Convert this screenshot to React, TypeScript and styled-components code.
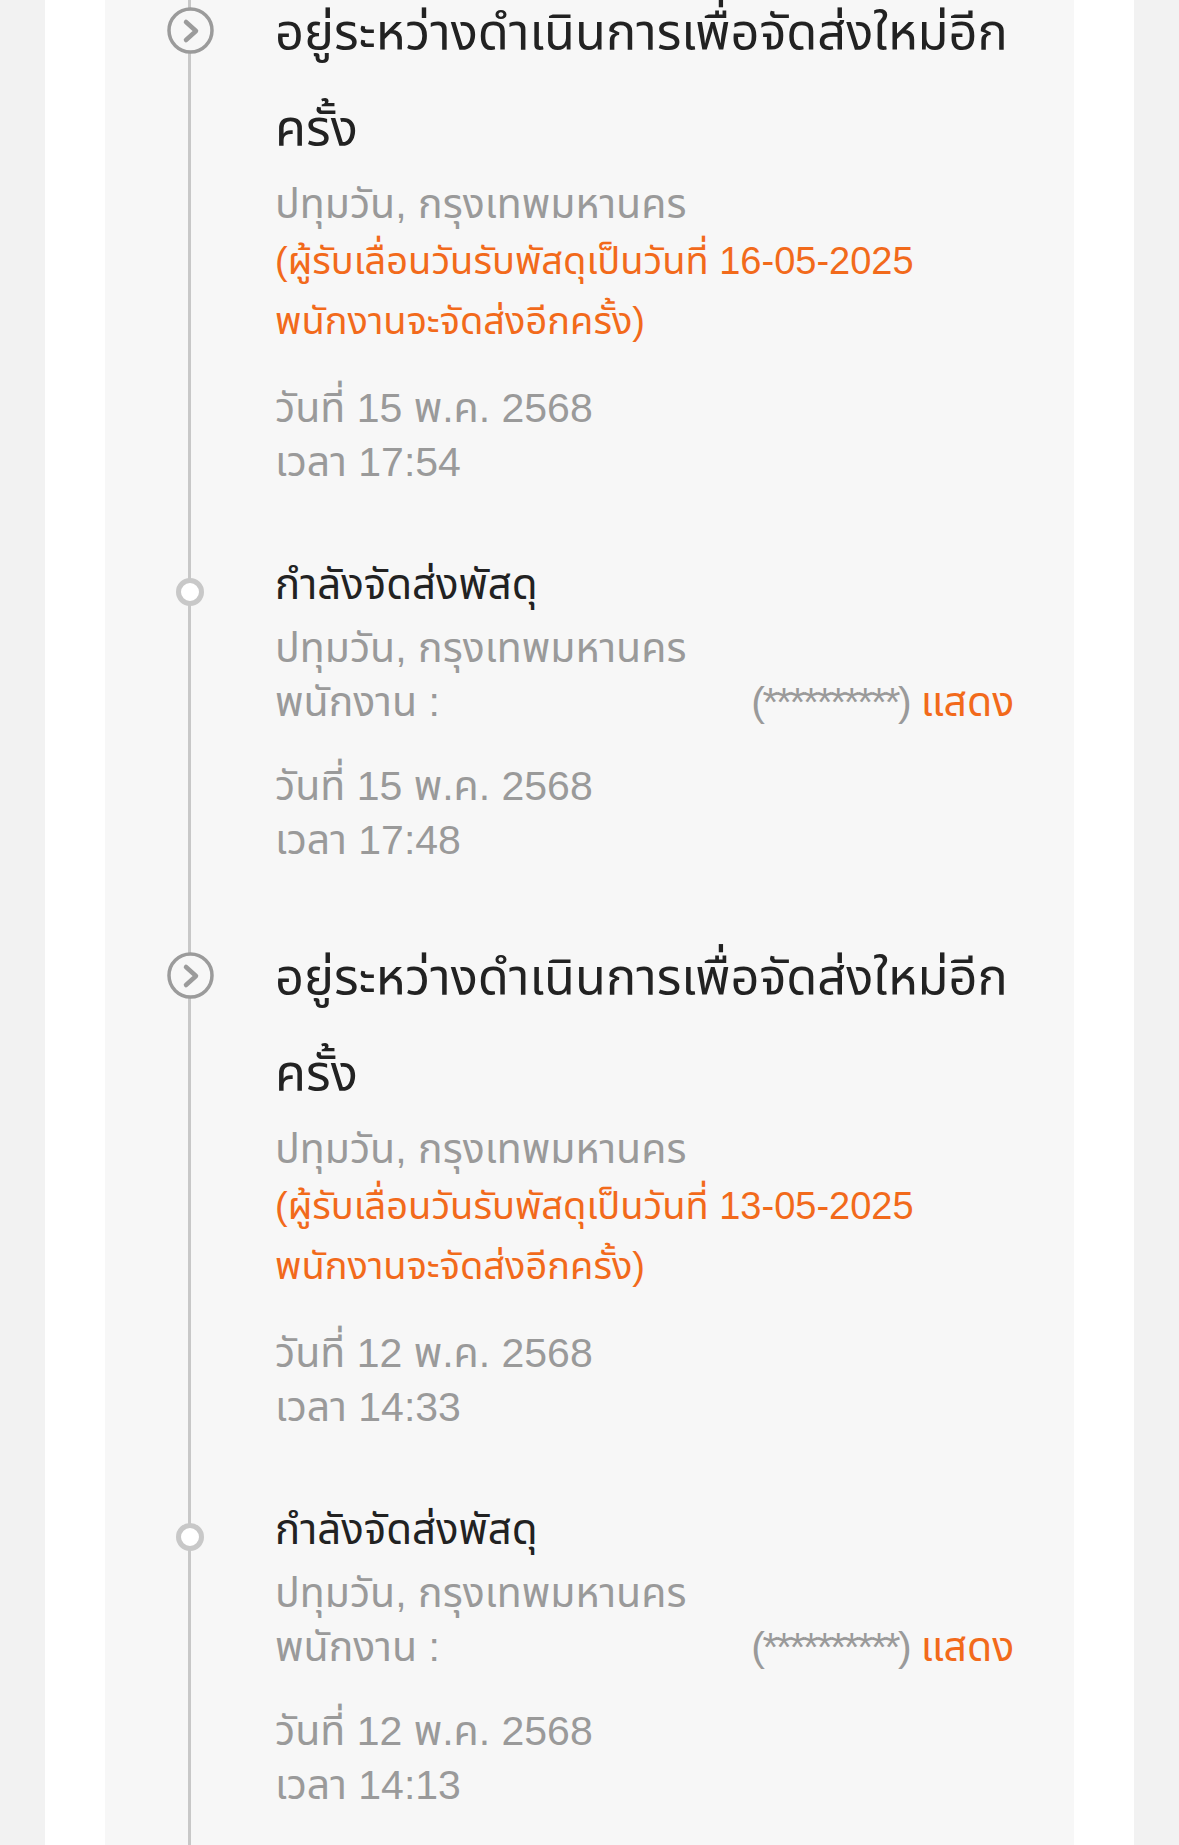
import { createGlobalStyle, styled } from "styled-components";

const GlobalStyle = createGlobalStyle`
  html, body {
    margin: 0;
    padding: 0;
  }
  body {
    background-color: #f2f2f2;
    font-family: "Liberation Sans", "Noto Sans Thai", "Noto Sans", sans-serif;
    -webkit-font-smoothing: antialiased;
  }
`;

const Page = styled.div`
  height: 100vh;
  overflow: hidden;
  padding: 0 45px;
  background-color: #f2f2f2;
`;

const Sheet = styled.div`
  height: 100%;
  background-color: #ffffff;
  padding: 0 60px;
`;

const Card = styled.div`
  display: flow-root;
  height: 100%;
  background-color: #f7f7f7;
`;

const Timeline = styled.ul`
  list-style: none;
  margin: -15px 0 0;
  padding: 0;
`;

const Item = styled.li<{ $big: boolean }>`
  display: grid;
  grid-template-columns: 170px 1fr;
  padding-bottom: ${props => (props.$big ? 69 : 63)}px;
  background: linear-gradient(#c8c8c8, #c8c8c8) 83px 0 / 3px 100% no-repeat;
`;

const Rail = styled.div<{ $top: number }>`
  display: flex;
  justify-content: center;
  padding-top: ${props => props.$top}px;
`;

const Dot = styled.span`
  box-sizing: border-box;
  width: 28px;
  height: 28px;
  border-radius: 50%;
  border: 5px solid #c8c8c8;
  background-color: #ffffff;
`;

const Body = styled.div`
  white-space: nowrap;
`;

const Title = styled.div<{ $big: boolean }>`
  color: #222222;
  font-size: ${props => (props.$big ? 50.5 : 42)}px;
  line-height: ${props => (props.$big ? 96 : 54)}px;
  margin-bottom: ${props => (props.$big ? 0 : 9)}px;
`;

const Muted = styled.div`
  color: #9a9a9a;
  font-size: 41px;
  line-height: 54px;
`;

const Note = styled.div`
  color: #f26a1b;
  font-size: 38px;
  line-height: 60px;
`;

const Redacted = styled.span`
  display: inline-block;
  width: 300px;
`;

const Masked = styled.span`
  letter-spacing: -2.4px;
`;

const ShowLink = styled.span`
  color: #f26a1b;
`;

const Stamp = styled.div`
  margin-top: 30px;
`;

function ChevronMarker() {
  return (
    <svg width="47" height="47" viewBox="0 0 47 47">
      <circle cx="23.5" cy="23.5" r="21.5" fill="#f7f7f7" stroke="#9b9b9b" strokeWidth="3.5" />
      <path
        d="M19 15 L29 24 L19 33"
        fill="none"
        stroke="#9b9b9b"
        strokeWidth="4.5"
        strokeLinecap="round"
        strokeLinejoin="round"
      />
    </svg>
  );
}

type Event = {
  big: boolean;
  title: string[];
  note?: string[];
  courier?: boolean;
  date: string;
  time: string;
};

const events: Event[] = [
  {
    big: true,
    title: ["อยู่ระหว่างดำเนินการเพื่อจัดส่งใหม่อีก", "ครั้ง"],
    note: ["(ผู้รับเลื่อนวันรับพัสดุเป็นวันที่ 16-05-2025", "พนักงานจะจัดส่งอีกครั้ง)"],
    date: "วันที่ 15 พ.ค. 2568",
    time: "เวลา 17:54",
  },
  {
    big: false,
    title: ["กำลังจัดส่งพัสดุ"],
    courier: true,
    date: "วันที่ 15 พ.ค. 2568",
    time: "เวลา 17:48",
  },
  {
    big: true,
    title: ["อยู่ระหว่างดำเนินการเพื่อจัดส่งใหม่อีก", "ครั้ง"],
    note: ["(ผู้รับเลื่อนวันรับพัสดุเป็นวันที่ 13-05-2025", "พนักงานจะจัดส่งอีกครั้ง)"],
    date: "วันที่ 12 พ.ค. 2568",
    time: "เวลา 14:33",
  },
  {
    big: false,
    title: ["กำลังจัดส่งพัสดุ"],
    courier: true,
    date: "วันที่ 12 พ.ค. 2568",
    time: "เวลา 14:13",
  },
];

function App() {
  return (
    <>
      <GlobalStyle />
      <Page>
        <Sheet>
          <Card>
            <Timeline>
              {events.map((ev, i) => (
                <Item key={i} $big={ev.big}>
                  <Rail $top={ev.big ? 22 : 20}>{ev.big ? <ChevronMarker /> : <Dot />}</Rail>
                  <Body>
                    <Title $big={ev.big}>
                      {ev.title.map(line => (
                        <div key={line}>{line}</div>
                      ))}
                    </Title>
                    <Muted>ปทุมวัน, กรุงเทพมหานคร</Muted>
                    {ev.note && (
                      <Note>
                        {ev.note.map(line => (
                          <div key={line}>{line}</div>
                        ))}
                      </Note>
                    )}
                    {ev.courier && (
                      <Muted>
                        พนักงาน : <Redacted />
                        <Masked>(**********)</Masked> <ShowLink>แสดง</ShowLink>
                      </Muted>
                    )}
                    <Stamp>
                      <Muted>{ev.date}</Muted>
                      <Muted>{ev.time}</Muted>
                    </Stamp>
                  </Body>
                </Item>
              ))}
            </Timeline>
          </Card>
        </Sheet>
      </Page>
    </>
  );
}

export default App;
